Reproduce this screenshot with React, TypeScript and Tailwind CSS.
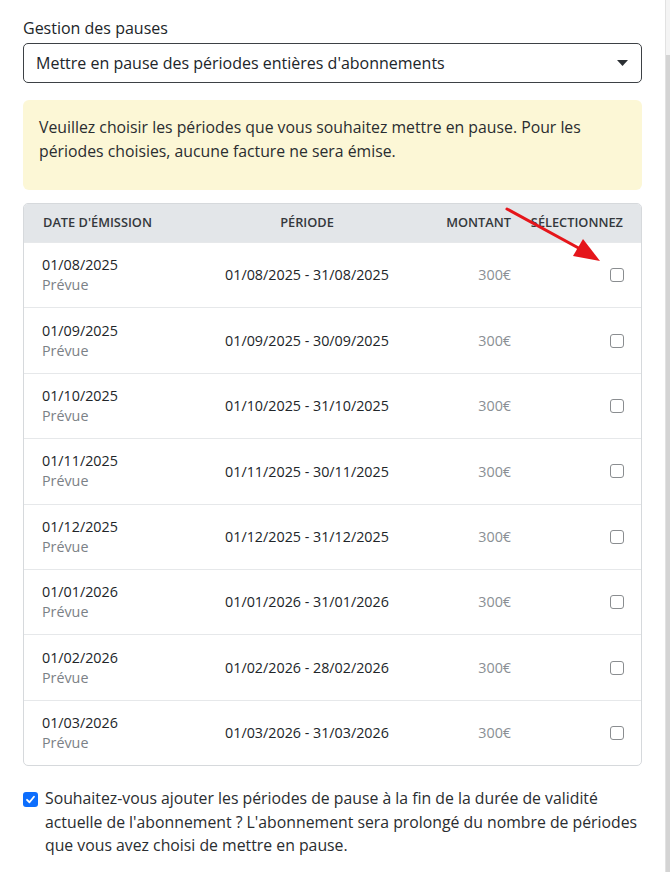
import React from "react";

const rows = [
  { date: "01/08/2025", period: "01/08/2025 - 31/08/2025" },
  { date: "01/09/2025", period: "01/09/2025 - 30/09/2025" },
  { date: "01/10/2025", period: "01/10/2025 - 31/10/2025" },
  { date: "01/11/2025", period: "01/11/2025 - 30/11/2025" },
  { date: "01/12/2025", period: "01/12/2025 - 31/12/2025" },
  { date: "01/01/2026", period: "01/01/2026 - 31/01/2026" },
  { date: "01/02/2026", period: "01/02/2026 - 28/02/2026" },
  { date: "01/03/2026", period: "01/03/2026 - 31/03/2026" },
];

function EmptyBox() {
  return <span className="block w-[14px] h-[14px] rounded-[3px] border border-[#8a8d90] bg-white" />;
}

export default function App() {
  return (
    <div className="relative w-[670px] h-[872px] overflow-hidden bg-white text-[#212529]" style={{ fontFamily: '"Open Sans", "Noto Sans", sans-serif' }}>
      <div className="pl-[23px] pr-[28px] pt-4">
        <label className="block text-[16px] leading-[24px] mb-[3px]">Gestion des pauses</label>

        <div className="flex items-center justify-between h-[40px] rounded-[5px] border border-[#3d4145] pl-[12px] pr-[12px] text-[16px]">
          <span>Mettre en pause des périodes entières d'abonnements</span>
          <svg width="11" height="6" viewBox="0 0 11 6" className="mr-[1px]">
            <path d="M0 0 L11 0 L5.5 6 Z" fill="#2b2f33" />
          </svg>
        </div>

        <div className="mt-[17px] h-[90px] rounded-[6px] bg-[#fcf7d6] pl-[16px] pr-4 pt-[15px] text-[15.8px] leading-[24px] text-[#2a2d30]">
          Veuillez choisir les périodes que vous souhaitez mettre en pause. Pour les périodes choisies, aucune facture ne sera émise.
        </div>

        <div className="relative mt-[13px] rounded-[5px] border border-[#d6d9dc] overflow-hidden">
          <div className="grid grid-cols-[168px_230px_108px_1fr] h-[38px] items-center bg-[#e3e6e9] text-[12.8px] font-semibold text-[#34383c]">
            <div className="pl-[19px]">DATE D'ÉMISSION</div>
            <div className="text-center">PÉRIODE</div>
            <div className="text-right pr-[19px]">MONTANT</div>
            <div className="text-right pr-[18px]">SÉLECTIONNEZ</div>
          </div>
          {rows.map((r) => (
            <div key={r.date} className="grid grid-cols-[168px_230px_108px_1fr] h-[65.4px] items-center border-t border-[#e6e8ea] text-[14.3px]">
              <div className="pl-[18px] leading-[20px]">
                <div>{r.date}</div>
                <div className="text-[#7b8186]">Prévue</div>
              </div>
              <div className="text-center">{r.period}</div>
              <div className="text-right pr-[19px] text-[#8a8f94]">300€</div>
              <div className="flex justify-end pr-[17px]">
                <EmptyBox />
              </div>
            </div>
          ))}
        </div>

        <div className="mt-[21px] flex items-start gap-[7px]">
          <span className="mt-[5px] flex-none flex items-center justify-center w-[15px] h-[15px] rounded-[3px] bg-[#0d6efd]">
            <svg width="11" height="11" viewBox="0 0 12 12">
              <path d="M2.2 6.3 L4.9 9 L9.8 3" fill="none" stroke="#fff" strokeWidth="2" strokeLinecap="round" strokeLinejoin="round" />
            </svg>
          </span>
          <p className="text-[15.8px] leading-[23.5px] text-[#2a2d30]">
            Souhaitez-vous ajouter les périodes de pause à la fin de la durée de validité actuelle de l'abonnement ? L'abonnement sera prolongé du nombre de périodes que vous avez choisi de mettre en pause.
          </p>
        </div>
      </div>

      {/* red pointer over the selection column */}
      <svg className="absolute left-0 top-0 pointer-events-none" width="670" height="872">
        <line x1="507" y1="209" x2="584" y2="251" stroke="#e5161b" strokeWidth="3" strokeLinecap="round" />
        <path d="M600 261 L573 256 L583 239 Z" fill="#e5161b" />
      </svg>

      {/* window scrollbar */}
      <div className="absolute right-0 top-0 h-full w-[5px] border-l border-[#e2e2e2] bg-[#f4f4f4]">
        <div className="mt-[55px] h-full bg-[#d4d4d4]" />
      </div>
    </div>
  );
}
